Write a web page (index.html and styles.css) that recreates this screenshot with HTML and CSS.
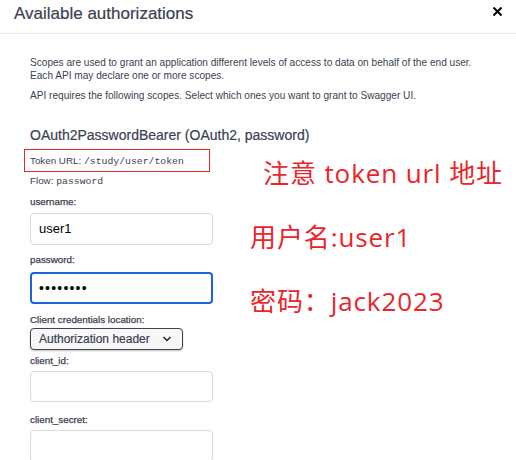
FILE: index.html
```html
<!DOCTYPE html>
<html>
<head>
<meta charset="utf-8">
<link rel="stylesheet" href="styles.css">
</head>
<body>
<div class="modal">
  <div class="modal-header">
    <h3 class="title">Available authorizations</h3>
    <button class="close" aria-label="close">
      <svg width="9" height="9" viewBox="0 0 9 9"><path d="M1.2 1.2 L7.8 7.8 M7.8 1.2 L1.2 7.8" stroke="#000" stroke-width="2" stroke-linecap="square"/></svg>
    </button>
  </div>
  <div class="modal-body">
    <p class="scopes">Scopes are used to grant an application different levels of access to data on behalf of the end user. Each API may declare one or more scopes.</p>
    <p class="scopes second">API requires the following scopes. Select which ones you want to grant to Swagger UI.</p>
    <h4 class="scheme">OAuth2PasswordBearer (OAuth2, password)</h4>
    <div class="token-url">Token URL: <code>/study/user/token</code></div>
    <div class="flow">Flow: <code>password</code></div>
    <label class="lbl l-user">username:</label>
    <div class="input i-user">user1</div>
    <label class="lbl l-pass">password:</label>
    <div class="input focus i-pass"><span class="dots">••••••••</span></div>
    <label class="lbl l-loc">Client credentials location:</label>
    <div class="select">Authorization header
      <svg width="10" height="6" viewBox="0 0 10 6"><path d="M1.5 1 L5 4.5 L8.5 1" fill="none" stroke="#222" stroke-width="1.5"/></svg>
    </div>
    <label class="lbl l-id">client_id:</label>
    <div class="input i-id"></div>
    <label class="lbl l-secret">client_secret:</label>
    <div class="input i-secret"></div>

    <div class="note n1">注意 token url 地址</div>
    <div class="note n2">用户名:user1</div>
    <div class="note n3">密码：jack2023</div>
  </div>
</div>
</body>
</html>
```
FILE: styles.css
```css
* { box-sizing: border-box; }
html, body { margin: 0; padding: 0; background: #fff; }
body {
  font-family: "Liberation Sans", Arial, sans-serif;
  color: #3b4151;
  width: 516px;
  height: 460px;
  overflow: hidden;
}
.modal-header {
  height: 34px;
  border-bottom: 1px solid #ebebeb;
  display: flex;
  align-items: center;
  justify-content: space-between;
  padding: 0 14px 0 14px;
}
.title {
  margin: 0;
  font-size: 17px;
  font-weight: normal;
  color: #3b4151;
  position: relative;
  top: -3px;
  -webkit-text-stroke: 0.2px #3b4151;
}
.close {
  border: 0;
  background: none;
  padding: 0;
  width: 12px;
  height: 12px;
  display: flex;
  align-items: center;
  justify-content: center;
  position: relative;
  top: -5px;
  left: 1px;
}
.modal-body {
  position: relative;
  padding: 22px 0 0 30px;
}
.scopes {
  margin: 0;
  font-size: 10.1px;
  line-height: 13px;
  width: 456px;
}
.scopes.second { margin-top: 7px; }
.scheme {
  margin: 24px 0 0 0;
  font-size: 14px;
  font-weight: normal;
  line-height: 18px;
  -webkit-text-stroke: 0.2px #3b4151;
}
.token-url {
  margin: 5px 0 0 -6px;
  width: 186px;
  height: 23px;
  border: 1px solid #e02a2a;
  padding-left: 5px;
  font-size: 9.8px;
  line-height: 21px;
}
code {
  font-family: "Liberation Mono", "DejaVu Sans Mono", monospace;
  font-size: 9.8px;
}
.flow {
  margin-top: 2px;
  font-size: 9.8px;
  line-height: 13px;
}
.lbl {
  display: block;
  font-size: 9.8px;
  line-height: 13px;
  color: #3b4151;
  -webkit-text-stroke: 0.25px #3b4151;
}
.l-user { margin-top: 7px; }
.l-pass { margin-top: 8px; }
.l-loc { margin-top: 9px; }
.l-id { margin-top: 4px; }
.l-secret { margin-top: 11px; }
.input {
  width: 183px;
  height: 32px;
  border: 1px solid #d9d9d9;
  border-radius: 4px;
  font-size: 13px;
  line-height: 30px;
  padding-left: 8px;
  color: #000;
}
.i-user { margin-top: 5px; }
.i-pass { margin-top: 6px; }
.i-id { margin-top: 4px; height: 31px; }
.i-secret { margin-top: 4px; }
.input.focus {
  border: 2px solid #1a64d5;
  line-height: 28px;
  padding-left: 7px;
}
.dots { font-size: 14px; letter-spacing: 1.2px; }
.select {
  margin-top: 2px;
  width: 153px;
  height: 22px;
  border: 1px solid #41444e;
  border-radius: 4px;
  box-shadow: 0 1px 2px rgba(0,0,0,.25);
  background: #f7f7f7;
  font-size: 12px;
  line-height: 20px;
  padding-left: 8px;
  padding-right: 10px;
  display: flex;
  align-items: center;
  justify-content: space-between;
  color: #3b4151;
  -webkit-text-stroke: 0.2px #3b4151;
}
.note {
  position: absolute;
  color: #e8262b;
  font-family: "Open Sans", "Noto Sans CJK SC", sans-serif;
  font-size: 26px;
  line-height: 30px;
  letter-spacing: 0.9px;
  white-space: nowrap;
}
.n1 { left: 263px; top: 124px; }
.n2 { left: 250px; top: 188px; }
.n3 { left: 250px; top: 252px; }
```
